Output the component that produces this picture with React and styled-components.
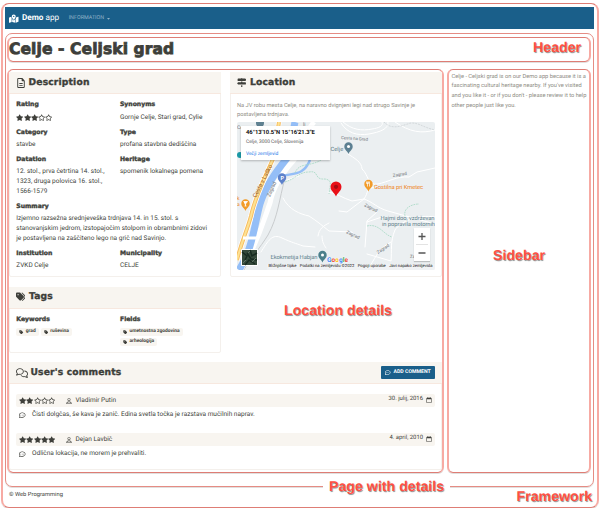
import React from "react";
import styled, { createGlobalStyle, css } from "styled-components";
import {
  FaMapLocationDot, FaRegFileLines, FaSignsPost, FaTags, FaTag, FaRegComments,
  FaStar, FaRegStar, FaRegUser, FaRegCommentDots, FaRegCalendar,
} from "react-icons/fa6";

const Global = createGlobalStyle`
  * { box-sizing: border-box; }
  body {
    margin: 0;
    background: #fff;
    color: #3e3f3a;
    font: 6.5px/9.75px Roboto, sans-serif;
    text-rendering: geometricPrecision;
  }
  svg { display: block; flex: none; }
  h1, h2, p { margin: 0; }
`;

const outline = css`
  position: relative;
  border: solid;
  border-width: 1px 2px;
  border-color: #de7d75 #f7aaa3;
  box-shadow: 0 1px 0 rgba(120, 110, 105, 0.22);
`;

const Framework = styled.div`
  ${outline}
  width: 598px;
  height: 505px;
  margin: 3px 0 0 1px;
  padding: 3px 3px 0 2px;
  border-radius: 8px;
`;

const Navbar = styled.nav`
  display: flex;
  align-items: center;
  height: 22px;
  padding: 1px 4px 0;
  background: #1a5f8a;
  color: #fff;
`;

const Brand = styled.div`
  display: flex;
  align-items: center;
  gap: 3.5px;
  font-size: 8.2px;
  b { font-weight: 700; }
`;

const NavItem = styled.div`
  display: flex;
  align-items: center;
  gap: 2.5px;
  margin-left: 9.5px;
  font-size: 5.4px;
  color: #93b3c8;
`;

const Page = styled.div`
  ${outline}
  width: 589px;
  height: 454px;
  margin-top: 4px;
  padding: 3px 1px 0 0;
  border-width: 1px;
  border-color: #e58c84;
  border-radius: 7px;
`;

const Header = styled.header`
  ${outline}
  display: flex;
  align-items: center;
  width: 584px;
  height: 25px;
  margin-left: 1px;
  border-radius: 6px;
`;

const heavy = css`
  font-family: "DejaVu Sans", sans-serif;
  font-weight: 700;
  -webkit-text-stroke: 0.35px currentColor;
`;

const Title = styled.h1`
  ${heavy}
  font-size: 15.5px;
  line-height: 20px;
  letter-spacing: 0.1px;
  margin-top: -2px;
  -webkit-text-stroke-width: 0.8px;
`;

const Columns = styled.div`
  display: flex;
  gap: 3px;
  margin: 7px 0 0 1px;
`;

const Details = styled.main`
  ${outline}
  width: 437px;
  height: 404px;
  padding-top: 2px;
  border-radius: 6px;
`;

const Sidebar = styled.aside`
  ${outline}
  width: 144px;
  height: 404px;
  padding: 2.5px 0 0 2.5px;
  border-radius: 6px;
  color: #8e8c84;
  font-size: 5.7px;
  white-space: nowrap;
`;

const Cards = styled.div`
  display: grid;
  grid-template-columns: 212px 212px;
  grid-template-rows: 205px 66px 108px;
  column-gap: 9px;
  row-gap: 9.5px;
`;

const Card = styled.section`
  grid-column: ${(p) => (p.$wide ? "1 / 3" : "auto")};
  border: 1px solid #f4f0ec;
  border-radius: 2px;
`;

const CardHeader = styled.div`
  display: flex;
  align-items: center;
  justify-content: space-between;
  height: 22px;
  padding: 0 7px 0 6px;
  margin: -1px -1px 0;
  background: #f8f5f0;
  border-bottom: 1px solid #f7e8df;
`;

const Heading = styled.h2`
  ${heavy}
  display: flex;
  align-items: center;
  gap: ${(p) => p.$gap || 3}px;
  font-size: 9.2px;
  line-height: 12px;
  letter-spacing: 0.15px;
  svg { margin-left: 0.5px; }
`;

const Fields = styled.div`
  display: grid;
  grid-template-columns: 103.7px 1fr;
  row-gap: 5.4px;
  padding: 6.4px 0 0 6.3px;
  white-space: nowrap;
`;

const Field = styled.div`
  grid-column: ${(p) => (p.$wide ? "1 / 3" : "auto")};
`;

const Label = styled.div`
  ${heavy}
  font-size: 6.1px;
  margin-bottom: 2.5px;
`;

const StarRow = styled.div`
  display: flex;
  align-items: center;
  height: 9.75px;
`;

const Badges = styled.div`
  display: flex;
  flex-direction: ${(p) => (p.$column ? "column" : "row")};
  align-items: flex-start;
  gap: 2px;
  padding-top: 0.7px;
`;

const Badge = styled.span`
  display: flex;
  align-items: center;
  gap: 2px;
  height: 8px;
  padding: 0 3px;
  border-radius: 2px;
  background: #f8f5f0;
  font-size: 4.9px;
  font-weight: 700;
`;

const Lead = styled.p`
  padding: 7.5px 0 0 6px;
  height: 28px;
  color: #8e8c84;
  white-space: nowrap;
  font-size: 5.7px;
`;

const MapBox = styled.div`
  position: relative;
  width: 198px;
  height: 148px;
  margin-left: 6px;
  border-radius: 2px;
  overflow: hidden;
`;

const MapInfo = styled.div`
  position: absolute;
  left: 4px;
  top: 4px;
  width: 89px;
  height: 34px;
  padding: 3px 5px;
  background: #fff;
  box-shadow: 0 1px 2px rgba(0, 0, 0, 0.25);
  color: #555;
  font-size: 4.9px;
  line-height: 8px;
  white-space: nowrap;
  b { display: block; color: #111; font-size: 5.8px; line-height: 9px; }
  a { display: block; color: #1a73e8; margin-top: 3.5px; }
`;

const ZoomBox = styled.div`
  position: absolute;
  right: 5px;
  bottom: 9px;
  width: 16px;
  height: 33px;
  background: #fff;
  box-shadow: 0 1px 1px rgba(0, 0, 0, 0.2);
`;

const MapTerms = styled.div`
  position: absolute;
  left: 31.5px;
  right: 2.5px;
  bottom: 0;
  display: flex;
  justify-content: space-between;
  font-size: 4.2px;
  line-height: 6px;
  color: #111;
  white-space: nowrap;
`;

const AddButton = styled.div`
  display: flex;
  align-items: center;
  gap: 3px;
  height: 13px;
  width: 54px;
  padding-left: 4px;
  border-radius: 1px;
  background: #1a5f8a;
  color: #fff;
  font-size: 5.2px;
  font-weight: 700;
  white-space: nowrap;
`;

const Comments = styled.div`
  display: grid;
  row-gap: 10px;
  padding: 9.8px 6px 0;
`;

const CommentBar = styled.div`
  display: flex;
  align-items: center;
  height: 13px;
  padding: 0 3px;
  border-radius: 2px;
  background: #f8f5f0;
`;

const Author = styled.div`
  display: flex;
  align-items: center;
  gap: 3.5px;
  margin-left: 10.5px;
  padding-top: 1px;
  font-size: 6.5px;
`;

const Posted = styled.div`
  display: flex;
  align-items: center;
  gap: 3px;
  margin-left: auto;
  font-size: 5.9px;
`;

const CommentText = styled.div`
  display: flex;
  align-items: center;
  gap: 6.5px;
  height: 16px;
  padding: 1px 3px 0;
  font-size: 6.5px;
`;

const Footer = styled.footer`
  margin: 4px 0 0 4px;
  font-size: 5.8px;
`;

const Tag = styled.div`
  position: absolute;
  left: ${(p) => p.$x}px;
  top: ${(p) => p.$y}px;
  padding: 0 ${(p) => p.$pad || 0}px;
  background: ${(p) => (p.$pad ? "#fff" : "none")};
  color: #ff4f42;
  font: bold 14.2px/16px "Liberation Sans", sans-serif;
  text-shadow: 0.7px 1px 0.7px rgba(70, 80, 80, 0.6);
  white-space: nowrap;
  z-index: 2;
`;

const Stars = ({ value }) => (
  <StarRow>
    {[1, 2, 3, 4, 5].map((n) => (n <= value ? <FaStar key={n} size={7.3} /> : <FaRegStar key={n} size={7.3} />))}
  </StarRow>
);

const Pin = ({ x, y, s = 1, fill, children }) => (
  <g transform={`translate(${x} ${y}) scale(${s})`}>
    <path d="M0 7 C-1 4 -4.2 3 -4.2 -0.5 A4.2 4.2 0 0 1 4.2 -0.5 C4.2 3 1 4 0 7Z" fill={fill} />
    {children || <circle cy="-0.5" r="1.5" fill="#fff" />}
  </g>
);

const road = { fill: "none", stroke: "#fff", strokeWidth: 1, strokeLinecap: "round" };
const trail = { fill: "none", stroke: "#a5d8c3", strokeWidth: 0.8, strokeDasharray: "1.8 0.8" };
const street = { fontSize: 5, fill: "#6b7075", fontFamily: "Roboto, sans-serif" };
const place = { fontSize: 5.8, fontFamily: "Roboto, sans-serif" };

const MapDrawing = () => (
  <svg width="198" height="148" viewBox="0 0 198 148">
    <rect width="198" height="148" fill="#ebeff1" />
    <g {...road}>
      <path d="M104 1 C110 11 120 14 132 12 C143 10 152 7 151 0 M106 0 C115 8 125 9 135 7 C142 6 147 4 145 0" />
      <path d="M111 32 C117 36 125 40 125 47 C132 53 130 64 141 62 C151 60 160 54 172 55 L180 50 L198 46" />
      <path d="M91 70 C100 71 105 76 115 79 L127 77 C132 70 128 67 138 65 M127 77 L110 90 L102 89 M127 77 C136 80 140 86 151 89 L198 102" />
      <path d="M46 76 C52 88 63 92 72 94 C80 99 87 105 92 109 L115 110 L119 117 M92 101 C86 104 82 107 81 114 M85 114 C85 120 87 123 89 126" />
      <path d="M24 130 C31 119 35 111 45 116 C56 121 58 121 66 124 L78 125 M140 90 L130 99 L128 125 M130 100 L145 95 M198 95 C180 92 163 100 158 108 C153 120 155 128 154 139 L130 132" />
      <path d="M158 0 C173 10 184 12 198 8 M62 54 L50 58 M154 120 C139 128 139 137 130 148" />
    </g>
    <path d="M77 0 C67 12 63 28 57 38 C45 51 36 64 33 81 C27 97 23 115 5 148" fill="none" stroke="#fff" strokeWidth="5" />
    <path d="M58 0 C54 15 60 25 50 36 C38 51 28 65 23 82 C17 104 16 126 2 148" fill="none" stroke="#94bef7" strokeWidth="7" />
    <path d="M73 38 C67 53 58 51 45 54" fill="none" stroke="#94bef7" strokeWidth="2.5" />
    <path d="M48 56 C42 78 41 95 31 113 C23 126 13 137 7 148" fill="none" stroke="#c8cbcd" strokeWidth="1" />
    <path d="M42 0 L36 37 C27 57 18 75 14 94 C10 109 5 118 0 138" fill="none" stroke="#fff" strokeWidth="5.5" />
    <path d="M42 0 L36 37 C27 57 18 75 14 94 C10 109 5 118 0 138" fill="none" stroke="#f7bd62" strokeWidth="4" />
    <path d="M42 0 L36 37 C27 57 18 75 14 94 C10 109 5 118 0 138" fill="none" stroke="#fde293" strokeWidth="2" />
    <path d="M6 116 H22" fill="none" stroke="#fff" strokeWidth="3" />
    <g {...trail}>
      <path d="M48 60 C60 56 62 50 72 50 C83 48 76 58 88 57 C96 58 93 64 92 72" />
      <path d="M58 51 C62 40 73 45 84 38" />
      <path d="M130 104 C142 101 147 113 155 115 M168 94 C166 86 175 82 182 82" />
    </g>
    <path d="M147 0 C155 9 166 3 174 1 C183 1 185 5 198 8" fill="none" stroke="#c5cacd" strokeWidth="0.6" strokeDasharray="2 1" />
    <g {...street}>
      <text transform="translate(19 76) rotate(-63)" fill="#9b5b2b" fontSize="5.8">Cesta v Laško</text>
      <text transform="translate(33 75) rotate(-66)">Zagrad</text>
      <text transform="translate(104 17) rotate(4)" fontSize="4.3">Cesta na Grad</text>
      <text transform="translate(156 55) rotate(-9)" fontSize="4.5">Zagrad</text>
      <text transform="translate(127 84) rotate(27)" fontSize="4.5">Zagrad</text>
      <text transform="translate(109 111) rotate(26)" fontSize="4.5">Zagrad</text>
      <text transform="translate(141 132) rotate(-34)" fontSize="4.5">Zagrad</text>
      <text transform="translate(17 137) rotate(-72)" fontSize="4.5">grad</text>
      <text x="173" y="136" fontSize="4.5">Za</text>
      <text x="0" y="7">Ce</text>
      <text x="66" y="4">lj</text>
    </g>
    <g {...place} fill="#5f7f8c">
      <text x="93.5" y="28.5">Celje</text>
      <text x="143.5" y="97.5" textLength="54">Hajmi doo, vzdrževan</text>
      <text x="145" y="104" textLength="53">in popravila motornih</text>
      <text x="33.5" y="136.5" textLength="47">Ekokmetija Habjan</text>
      <text x="137" y="67" fill="#ef8320" textLength="49">Gostilna pri Kmetec</text>
      <text x="0" y="84" fill="#ef8320" fontSize="5">a</text>
      <text x="0" y="78" fill="#ef8320" fontSize="5">k</text>
    </g>
    <circle cx="23" cy="1" r="4" fill="#5f8191" />
    <circle cx="3" cy="33" r="3" fill="#1b99a6" />
    <Pin x={111.5} y={25} fill="#5c8092" />
    <Pin x={85.5} y={133.5} fill="#4b7f8b" />
    <Pin x={45} y={56} fill="#5d82cb"><text x="-1.6" y="1.6" fontSize="5.5" fontWeight="700" fill="#fff" fontFamily="Roboto, sans-serif">P</text></Pin>
    <Pin x={8.5} y={82} fill="#f29b28"><path d="M-2 -2.5 H2 L0 0 V2 M-1 2 H1" stroke="#fff" strokeWidth="0.8" fill="#fff" /></Pin>
    <Pin x={131.5} y={62.5} fill="#f29b28"><path d="M-1 -3 V2 M1 -3 V2 M-2 -3 V-1 H0 V-3" stroke="#fff" strokeWidth="0.7" fill="none" /></Pin>
    <Pin x={99} y={65.5} s={1.3} fill="#e90f18"><circle cy="-0.5" r="1.6" fill="#a50b12" /></Pin>
    <text x="90" y="139.5" fontSize="6.6" fontWeight="700" fontFamily="Roboto, sans-serif" stroke="#fff" strokeWidth="0.7" paintOrder="stroke">
      <tspan fill="#4285f4">G</tspan><tspan fill="#ea4335">o</tspan><tspan fill="#fbbc04">o</tspan><tspan fill="#4285f4">g</tspan><tspan fill="#34a853">l</tspan><tspan fill="#ea4335">e</tspan>
    </text>
    <rect x="4" y="127" width="17" height="17" rx="1" fill="#fff" />
    <rect x="5" y="128" width="15" height="15" fill="#34493b" />
    <path d="M5 130 L10 134 L8 138 M13 128 L15 134 L20 131 M8 143 L12 138 L18 142 M10 131 L14 137 L20 138" stroke="#172b21" strokeWidth="1.5" fill="none" />
    <path d="M6 141 L9 138 M11 131 L13 129 M15 140 L19 136" stroke="#63776a" strokeWidth="0.9" />
    <rect x="30" y="142" width="168" height="6" fill="#f1f3f4" opacity="0.75" />
  </svg>
);

const reviews = [
  { stars: 2, author: "Vladimir Putin", date: "30. julij, 2016", text: "Čisti dolgčas, še kava je zanič. Edina svetla točka je razstava mučilnih naprav." },
  { stars: 5, author: "Dejan Lavbič", date: "4. april, 2010", text: "Odlična lokacija, ne morem je prehvaliti." },
];

export default function App() {
  return (
    <>
      <Global />
      <Framework>
        <Navbar>
          <Brand><FaMapLocationDot size={9.5} /><span><b>Demo</b> app</span></Brand>
          <NavItem>INFORMATION<svg width="3" height="2"><path d="M0 0H3L1.5 1.8Z" fill="#93b3c8" /></svg></NavItem>
        </Navbar>
        <Page>
          <Header>
            <Title>Celje - Celjski grad</Title>
            <Tag $x={524} $y={2}>Header</Tag>
          </Header>
          <Columns>
            <Details>
              <Cards>
                <Card>
                  <CardHeader><Heading><FaRegFileLines size={10} />Description</Heading></CardHeader>
                  <Fields>
                    <Field><Label>Rating</Label><Stars value={3} /></Field>
                    <Field><Label>Synonyms</Label>Gornje Celje, Stari grad, Cylie</Field>
                    <Field><Label>Category</Label>stavbe</Field>
                    <Field><Label>Type</Label>profana stavbna dediščina</Field>
                    <Field><Label>Datation</Label>12. stol., prva četrtina 14. stol.,<br />1323, druga polovica 16. stol.,<br />1566-1579</Field>
                    <Field><Label>Heritage</Label>spomenik lokalnega pomena</Field>
                    <Field $wide><Label>Summary</Label>Izjemno razsežna srednjeveška trdnjava 14. in 15. stol. s<br />stanovanjskim jedrom, izstopajočim stolpom in obrambnimi zidovi<br />je postavljena na zaščiteno lego na grič nad Savinjo.</Field>
                    <Field><Label>Institution</Label>ZVKD Celje</Field>
                    <Field><Label>Municipality</Label>CELJE</Field>
                  </Fields>
                </Card>
                <Card>
                  <CardHeader><Heading $gap={4}><FaSignsPost size={9.5} />Location</Heading></CardHeader>
                  <Lead>Na JV robu mesta Celje, na naravno dvignjeni legi nad strugo Savinje je<br />postavljena trdnjava.</Lead>
                  <MapBox>
                    <MapDrawing />
                    <MapInfo><b>46°13'10.5"N 15°16'21.3"E</b>Celje, 3000 Celje, Slovenija<a>Večji zemljevid</a></MapInfo>
                    <ZoomBox>
                      <svg width="16" height="33"><path d="M4.5 8.5H11.5M8 5V12M4.5 25H11.5" stroke="#555" strokeWidth="1.3" /><path d="M2 16.5H14" stroke="#e3e3e3" /></svg>
                    </ZoomBox>
                    <MapTerms><span>Bližnjične tipke</span><span>Podatki na zemljevidu ©2022</span><span>Pogoji uporabe</span><span>Javi napako zemljevida</span></MapTerms>
                  </MapBox>
                </Card>
                <Card>
                  <CardHeader><Heading $gap={4}><FaTags size={9.5} />Tags</Heading></CardHeader>
                  <Fields>
                    <Field><Label>Keywords</Label><Badges><Badge><FaTag size={4.5} />grad</Badge><Badge><FaTag size={4.5} />ruševina</Badge></Badges></Field>
                    <Field><Label>Fields</Label><Badges $column><Badge><FaTag size={4.5} />umetnostna zgodovina</Badge><Badge><FaTag size={4.5} />arheologija</Badge></Badges></Field>
                  </Fields>
                </Card>
                <Card $wide>
                  <CardHeader>
                    <Heading><FaRegComments size={12} />User's comments</Heading>
                    <AddButton><FaRegCommentDots size={5.5} />ADD COMMENT</AddButton>
                  </CardHeader>
                  <Comments>
                    {reviews.map((r) => (
                      <div key={r.author}>
                        <CommentBar>
                          <Stars value={r.stars} />
                          <Author><FaRegUser size={6} />{r.author}</Author>
                          <Posted>{r.date}<FaRegCalendar size={6} /></Posted>
                        </CommentBar>
                        <CommentText><FaRegCommentDots size={6.5} />{r.text}</CommentText>
                      </div>
                    ))}
                  </Comments>
                </Card>
              </Cards>
              <Tag $x={275} $y={233}>Location details</Tag>
            </Details>
            <Sidebar>
              Celje - Celjski grad is on our Demo app because it is a<br />
              fascinating cultural heritage nearby. If you've visited<br />
              and you like it - or if you don't - please review it to help<br />
              other people just like you.
              <Tag $x={44} $y={178}>Sidebar</Tag>
            </Sidebar>
          </Columns>
          <Tag $x={317} $y={445} $pad={6}>Page with details</Tag>
        </Page>
        <Footer>© Web Programming</Footer>
        <Tag $x={513.5} $y={485}>Framework</Tag>
      </Framework>
    </>
  );
}
